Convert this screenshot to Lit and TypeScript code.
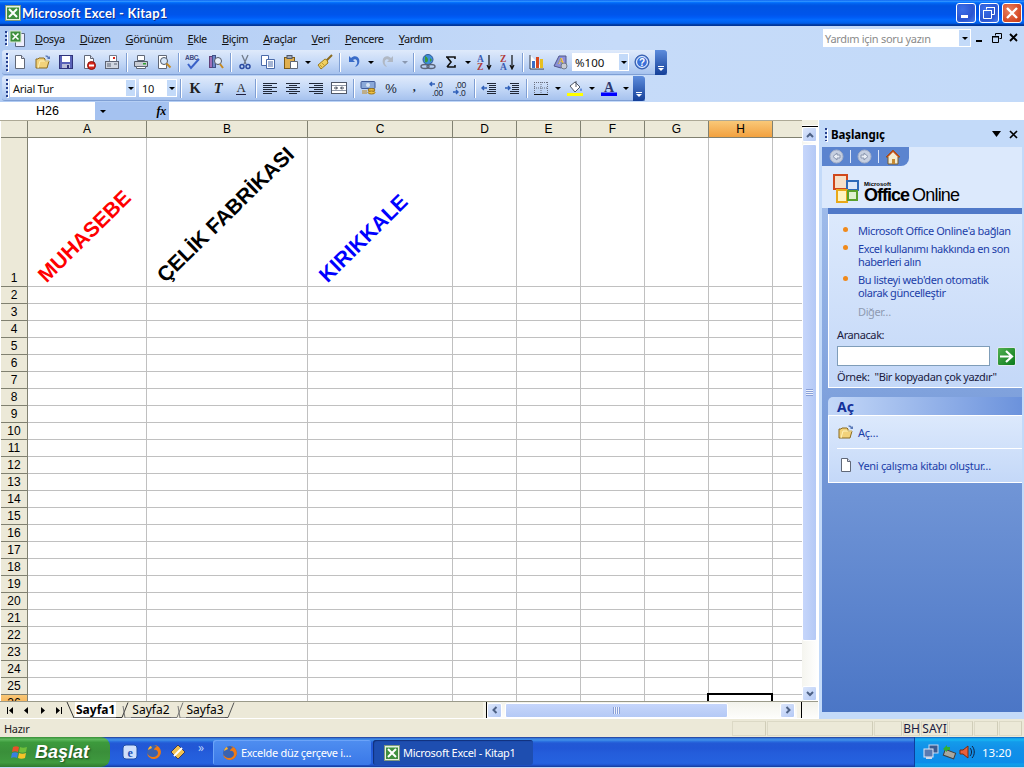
import { LitElement, html, css, svg, TemplateResult } from 'lit';
import { customElement } from 'lit/decorators.js';
import { classMap } from 'lit/directives/class-map.js';

const icon16 = (body: TemplateResult) =>
  html`<svg class="ico" width="16" height="16" viewBox="0 0 16 16">${body}</svg>`;

const excelIcon = svg`<rect x=".5" y=".5" width="15" height="15" fill="#e8f0e0" stroke="#7f9a7f"/><rect x="2" y="2" width="12" height="12" fill="#3f8f3f"/><path d="M4 4l8 8M12 4l-8 8" stroke="#fff" stroke-width="2"/><path d="M2 2h12v1H2z" fill="#8fc88f"/>`;
const firefox = svg`<circle cx="8" cy="8" r="7" fill="#3a62b0"/><path d="M8 1a7 7 0 1 1-7 8c1 2 3 4 6 4 3 0 5-2 5-4s-2-4-4-3c0-1 1-3 3-3-1-1-2-2-3-2z" fill="#f07a14"/><path d="M2 6c0-2 2-4 3-4l1 2z" fill="#f9b233"/>`;
const folder = svg`<path d="M1 5h2l1-1h5l1 1v2h4l-2 7H1z" fill="#f2d27a" stroke="#8a6a1e"/><path d="M3 14l2-7h9" fill="none" stroke="#fff2b8"/><path d="M10 2c2-1 3 0 4 1l1-1v3h-3l1-1c-1-1-2-1-3-2z" fill="#5878b8"/>`;
const page = svg`<path d="M3.5 1.5h6l3 3v10h-9z" fill="#fff" stroke="#606878"/><path d="M9.5 1.5v3h3" fill="#dde" stroke="#606878"/>`;

const ICONS: Record<string, TemplateResult> = {
  new: icon16(page),
  open: icon16(folder),
  save: icon16(svg`<rect x="1.5" y="1.5" width="13" height="13" fill="#5a62b8" stroke="#30347a"/><rect x="4" y="2" width="8" height="6" fill="#fff"/><rect x="4" y="10" width="8" height="4" fill="#b8bcd8"/><rect x="9" y="11" width="2" height="3" fill="#30347a"/>`),
  perm: icon16(svg`${page}<circle cx="10.5" cy="11.5" r="4" fill="#d8261c" stroke="#8a1410"/><rect x="8" y="10.5" width="5" height="2" fill="#fff"/>`),
  mail: icon16(svg`<path d="M5.5 1.5h7v8h-7z" fill="#fff" stroke="#70788a"/><rect x="1.5" y="7.5" width="13" height="7" fill="#d0d6e0" stroke="#5c6474"/><path d="M3 10h4M3 12h4M10 10h3" stroke="#5c6474"/><rect x="9" y="3" width="2" height="2" fill="#d8261c"/>`),
  print: icon16(svg`<path d="M4.5 1.5h7v5h-7z" fill="#fff" stroke="#606878"/><path d="M1.5 7.5h13v5h-13z" fill="#c8ccd4" stroke="#505868"/><path d="M3.5 12.5h9v2h-9z" fill="#fff" stroke="#606878"/><rect x="10" y="9" width="3" height="1.5" fill="#2ca02c"/>`),
  preview: icon16(svg`<path d="M2.5 1.5h8v13h-8z" fill="#fff" stroke="#606878"/><circle cx="8" cy="7" r="3.5" fill="#d8e8fa" stroke="#505868"/><path d="M10.5 9.5l4 4" stroke="#c88a20" stroke-width="2"/>`),
  spell: icon16(svg`<text x="0" y="6" font-family="Liberation Sans" font-size="6.5" font-weight="700" fill="#404a80">ABC</text><path d="M3 10l3 4 8-9" fill="none" stroke="#3a62c8" stroke-width="2"/>`),
  research: icon16(svg`<rect x="1.5" y="2.5" width="3" height="11" fill="#a070b8" stroke="#604078"/><rect x="4.5" y="1.5" width="3" height="12" fill="#7088c8" stroke="#405088"/><circle cx="10" cy="7" r="3.5" fill="#e8f0fa" stroke="#505868"/><path d="M12 10l3 4" stroke="#c88a20" stroke-width="2"/>`),
  cut: icon16(svg`<path d="M5 1l4 9M11 1L7 10" stroke="#707a8a" stroke-width="1.3"/><circle cx="5" cy="12.5" r="2" fill="none" stroke="#2a4aa0" stroke-width="1.5"/><circle cx="11" cy="12.5" r="2" fill="none" stroke="#2a4aa0" stroke-width="1.5"/>`),
  copy: icon16(svg`<path d="M1.5 1.5h7v10h-7z" fill="#fff" stroke="#4a6aa8"/><path d="M6.5 5.5h8v9h-8z" fill="#fff" stroke="#4a6aa8"/><path d="M8 8h5M8 10h5M8 12h5" stroke="#4a6aa8"/>`),
  paste: icon16(svg`<rect x="1.5" y="3.5" width="10" height="11" fill="#e0b050" stroke="#7a5a18"/><rect x="4" y="1.5" width="5" height="3" fill="#a0a8b8" stroke="#505868"/><path d="M7.5 7.5h7v7h-7z" fill="#fff" stroke="#606878"/>`),
  brush: icon16(svg`<path d="M15 1l-6 6" stroke="#8a6a1e" stroke-width="2"/><path d="M10 6l-2-1-7 6 3 4 7-6z" fill="#f0d060" stroke="#9a7a20"/><path d="M3 11l3 3M5 9l3 3" stroke="#c09a30"/>`),
  undo: icon16(svg`<path d="M3 2v6h6L7 6c3-2 5 1 4 4l-2 3c4-1 5-5 4-8-1-3-5-4-8-1z" fill="#3a6cc8"/>`),
  redo: icon16(svg`<path d="M13 2v6H7l2-2c-3-2-5 1-4 4l2 3c-4-1-5-5-4-8 1-3 5-4 8-1z" fill="#b0b8c4"/>`),
  link: icon16(svg`<circle cx="8" cy="5.5" r="5" fill="#3f8fd8" stroke="#305a98"/><path d="M5 2c2 1 3 2 3 4s-2 3-3 2zM10 4l2 2-2 2z" fill="#3a9a3a"/><ellipse cx="5" cy="12.5" rx="4" ry="2" fill="none" stroke="#5a6478" stroke-width="1.4"/><ellipse cx="11" cy="12.5" rx="4" ry="2" fill="none" stroke="#5a6478" stroke-width="1.4"/>`),
  sigma: icon16(svg`<path d="M3 3h9v2M4 3l4 5-4 5M4 13h8v-2" fill="none" stroke="#101010" stroke-width="1.6"/>`),
  az: icon16(svg`<text x="0" y="7.5" font-family="Liberation Serif" font-size="9.5" font-weight="700" fill="#3a5ab0">A</text><text x="0" y="15.5" font-family="Liberation Serif" font-size="9.5" font-weight="700" fill="#b03a3a">Z</text><path d="M12 1v13M10 11l2 4 2-4" fill="none" stroke="#101010" stroke-width="1.2"/>`),
  za: icon16(svg`<text x="0" y="7.5" font-family="Liberation Serif" font-size="9.5" font-weight="700" fill="#b03a3a">Z</text><text x="0" y="15.5" font-family="Liberation Serif" font-size="9.5" font-weight="700" fill="#3a5ab0">A</text><path d="M12 1v13M10 11l2 4 2-4" fill="none" stroke="#101010" stroke-width="1.2"/>`),
  chart: icon16(svg`<path d="M1 1v14h14" fill="#fff" stroke="#303848"/><rect x="3" y="7" width="3" height="7" fill="#3a6cc8"/><rect x="7" y="3" width="3" height="11" fill="#d8461c"/><rect x="11" y="5" width="3" height="9" fill="#e8c020"/>`),
  drawing: icon16(svg`<path d="M2 12L7 2h7v8l-5 4z" fill="#8a90d8" stroke="#50568a"/><text x="6" y="10" font-family="Liberation Serif" font-size="9" font-weight="700" fill="#f0c030">A</text><ellipse cx="12" cy="12" rx="3" ry="3" fill="#c8ccd4" stroke="#707888"/>`),
  help: icon16(svg`<circle cx="8" cy="8" r="7" fill="#5a8ae0" stroke="#2a50a0"/><circle cx="8" cy="8" r="5.4" fill="#3a70d8" stroke="#fff"/><text x="8" y="11.5" text-anchor="middle" font-family="Liberation Sans" font-size="10" font-weight="700" fill="#fff">?</text>`),
  bold: icon16(svg`<text x="8" y="13" text-anchor="middle" font-family="Liberation Serif" font-size="14.5" font-weight="700" fill="#202020">K</text>`),
  italic: icon16(svg`<text x="8" y="13" text-anchor="middle" font-family="Liberation Serif" font-size="14.5" font-weight="700" font-style="italic" fill="#202020">T</text>`),
  under: icon16(svg`<text x="8" y="12" text-anchor="middle" font-family="Liberation Serif" font-size="13" fill="#303030">A</text><path d="M3 14.5h10" stroke="#202040"/>`),
  left: icon16(svg`<path d="M1 3.5h14M1 5.5h9M1 7.5h14M1 9.5h9M1 11.5h14M1 13.5h9" stroke="#202838"/>`),
  center: icon16(svg`<path d="M1 3.5h14M4 5.5h8M1 7.5h14M4 9.5h8M1 11.5h14M4 13.5h8" stroke="#202838"/>`),
  right: icon16(svg`<path d="M1 3.5h14M6 5.5h9M1 7.5h14M6 9.5h9M1 11.5h14M6 13.5h9" stroke="#202838"/>`),
  merge: icon16(svg`<rect x=".5" y="2.5" width="15" height="11" fill="#fff" stroke="#505868"/><path d="M1 5.5h14M1 10.5h14" stroke="#9098a8"/><path d="M3 8h3M10 8h3M5 6.5L6.5 8 5 9.5M11 6.5L9.5 8 11 9.5" fill="none" stroke="#303848"/>`),
  currency: icon16(svg`<rect x="1" y="1.5" width="14" height="7" rx="1" fill="#8aa8d8" stroke="#405a98"/><circle cx="8" cy="5" r="2" fill="#d8e4f6"/><ellipse cx="11.5" cy="10" rx="3.5" ry="1.5" fill="#f0c040" stroke="#9a7418"/><ellipse cx="11.5" cy="12.5" rx="3.5" ry="1.5" fill="#f0c040" stroke="#9a7418"/><path d="M2 11h5M2 13h5" stroke="#c08a20"/>`),
  percent: icon16(svg`<text x="8" y="13" text-anchor="middle" font-family="Liberation Sans" font-size="13" fill="#202838">%</text>`),
  comma: icon16(svg`<text x="8" y="11" text-anchor="middle" font-family="Liberation Serif" font-size="12" font-weight="700" fill="#202838">,</text>`),
  incdec: icon16(svg`<path d="M6 4H1M3 2L1 4l2 2" fill="none" stroke="#2f5fb8" stroke-width="1.4"/><text x="7" y="7.500" font-family="Liberation Sans" font-size="8.5" fill="#202838">,0</text><text x="3" y="15.500" font-family="Liberation Sans" font-size="8.5" fill="#202838">,00</text>`),
  decdec: icon16(svg`<text x="3" y="7.500" font-family="Liberation Sans" font-size="8.5" fill="#202838">,00</text><path d="M1 12h5M4 10l2 2-2 2" fill="none" stroke="#2f5fb8" stroke-width="1.4"/><text x="7" y="15.500" font-family="Liberation Sans" font-size="8.5" fill="#202838">,0</text>`),
  outdent: icon16(svg`<path d="M6 3.5h9M8 5.5h7M8 7.5h7M8 9.5h7M6 11.5h9M6 13.5h9" stroke="#202838"/><path d="M6 8H1M3 6L1 8l2 2" fill="none" stroke="#2f5fb8" stroke-width="1.4"/>`),
  indent: icon16(svg`<path d="M6 3.5h9M8 5.5h7M8 7.5h7M8 9.5h7M6 11.5h9M6 13.5h9" stroke="#202838"/><path d="M1 8h5M4 6l2 2-2 2" fill="none" stroke="#2f5fb8" stroke-width="1.4"/>`),
  border: icon16(svg`<path d="M1.5 2v11M8 2v11M14.5 2v11M1 2.5h14M1 8h14" stroke="#6a7080" stroke-dasharray="1 1"/><path d="M1 14.5h14" stroke="#101010"/>`),
  fill: icon16(svg`<path d="M3 6l5-4 5 5-5 5z" fill="#fff" stroke="#505868"/><path d="M9 1v6" stroke="#505868"/><path d="M14 8c1 1 1 3 0 3s-1-2 0-3z" fill="#3a6cc8"/><rect x="0" y="13" width="16" height="3" fill="#ffff00"/>`),
  color: icon16(svg`<text x="8" y="11.5" text-anchor="middle" font-family="Liberation Serif" font-size="14" font-weight="700" fill="#303a70">A</text><rect x="0" y="12.5" width="16" height="3.5" fill="#0000ff"/>`),
};

type Tool = string;
// '|' separator, 'v' dropdown arrow, 'v-' disabled dropdown arrow
const STANDARD: Tool[] = ['new', 'open', 'save', 'perm', 'mail', '|', 'print', 'preview', '|', 'spell', 'research', '|', 'cut', 'copy', 'paste', 'v', 'brush', '|', 'undo', 'v', 'redo', 'v-', '|', 'link', 'sigma', 'v', 'az', 'za', '|', 'chart', 'drawing', 'zoom', 'help'];
const FORMAT: Tool[] = ['font', 'size', '|', 'bold', 'italic', 'under', '|', 'left', 'center', 'right', 'merge', '|', 'currency', 'percent', 'comma', 'incdec', 'decdec', '|', 'outdent', 'indent', '|', 'border', 'v', 'fill', 'v', 'color', 'v'];
const MENUS = ['Dosya', 'Düzen', 'Görünüm', 'Ekle', 'Biçim', 'Araçlar', 'Veri', 'Pencere', 'Yardım'];
const COLS = [
  { n: '', w: 27 }, { n: 'A', w: 119 }, { n: 'B', w: 161 }, { n: 'C', w: 145 }, { n: 'D', w: 64 },
  { n: 'E', w: 64 }, { n: 'F', w: 64 }, { n: 'G', w: 64 }, { n: 'H', w: 64 }, { n: '', w: 30 },
];
const HEADINGS: Record<string, { text: string; cls: string }> = {
  A: { text: 'MUHASEBE', cls: 'red' },
  B: { text: 'ÇELİK FABRİKASI', cls: 'black' },
  C: { text: 'KIRIKKALE', cls: 'blue' },
};
const STATUS = [{ w: 34 }, { w: 106 }, { w: 28 }, { w: 17, t: 'BH' }, { w: 27, t: 'SAYI' }, { w: 24 }, { w: 24 }, { w: 23 }];

const arrow = (dir: string) => html`<svg width="8" height="8" viewBox="0 0 8 8"><path d="${dir}" fill="none" stroke="#4d6185" stroke-width="2"/></svg>`;

@customElement('app-root')
export class AppRoot extends LitElement {
  static styles = css`
    :host { display: block; width: 1024px; height: 768px; overflow: hidden; font: 11px "Noto Sans", sans-serif; letter-spacing: -.3px; color: #000; background: #c3daf9; }
    * { box-sizing: border-box; }
    .app { display: flex; flex-direction: column; height: 768px; }
    svg { display: block; flex: none; }

    .title { height: 26px; display: flex; align-items: center; padding: 0 2px 0 5px; color: #fff; flex: none;
      background: linear-gradient(#0058ee 0%, #3593ff 4%, #288eff 6%, #127dff 8%, #036ffc 10%, #0262ee 14%, #0057e5 20%, #0054e3 24%, #0055eb 56%, #005bf5 66%, #026afe 76%, #0062ef 86%, #0052d6 92%, #0040ab 94%, #003092 100%); }
    .title b { font: 700 13px Lato, sans-serif; margin-left: 1px; flex: 1; text-shadow: 1px 1px #0f2f90; letter-spacing: .25px; }
    .wbtn { width: 20px; height: 20px; border: 1px solid #fff; border-radius: 3px; margin-left: 3px; background: radial-gradient(circle at 30% 30%, #3c6fe8, #2a54d0 60%, #4a7ef0); display: flex; align-items: center; justify-content: center; }
    .wbtn.close { background: radial-gradient(circle at 35% 35%, #e88060, #d8502c 60%, #c03810); }

    .bars { height: 76px; flex: none; background: linear-gradient(90deg, #b0cbf3, #c6dbf9 60%, #c3daf9); display: flex; flex-direction: column; }
    .menu { height: 25px; display: flex; align-items: center; padding-left: 3px; }
    .grip { width: 2px; height: 14px; margin: 0 2px 0 2px; flex: none; background: repeating-linear-gradient(#27418f 0 2px, transparent 2px 4px); box-shadow: 1px 1px #fff; }
    .menu .items { display: flex; gap: 15px; margin-left: 9px; color: #111; letter-spacing: -.42px; }
    .menu .items span::first-letter { text-decoration: underline; }
    .ask { margin-left: auto; width: 148px; height: 18px; background: #fff; display: flex; align-items: center; color: #8a8a8a; padding-left: 2px; justify-content: space-between; }
    .ask i { width: 11px; height: 16px; margin-right: 1px; background: #c3daf9; display: flex; align-items: center; justify-content: center; }
    .docbtns { width: 53px; display: flex; gap: 7px; padding-left: 4px; }
    .tri { width: 0; height: 0; border: 3px solid transparent; border-top: 3px solid #000; border-bottom: 0; flex: none; }

    .bar { height: 25px; display: flex; align-items: center; margin-left: 2px; padding-left: 2px; border-radius: 3px 0 0 3px; width: fit-content; background: linear-gradient(#dfeafb, #c5d9f7 50%, #a6c2ee); border-bottom: 1px solid #7f9fd4; margin-bottom: 1px; }
    .bar .grip { margin: 0 0 0 2px; height: 18px; }
    .btn { width: 23px; height: 22px; display: flex; align-items: center; justify-content: center; flex: none; }
    .sep { width: 6px; height: 19px; flex: none; display: flex; justify-content: center; }
    .sep::after { content: ""; width: 1px; background: #7f9fd4; box-shadow: 1px 0 #fff; }
    .dd { width: 11px; height: 22px; flex: none; display: flex; align-items: center; justify-content: center; }
    .dd.off .tri { border-top-color: #8a98b0; }
    .combo { height: 18px; background: #fff; display: flex; align-items: center; justify-content: space-between; padding-left: 3px; flex: none; color: #111; }
    .combo i { width: 11px; height: 18px; background: #c3daf9; border: 1px solid #fff; display: flex; align-items: center; justify-content: center; }
    .combo.font { width: 126px; margin-left: 2px; }
    .combo.size { width: 38px; margin-left: 3px; padding-left: 3px; }
    .combo.zoom { width: 57px; font-size: 11.5px; margin: 0 1px; letter-spacing: 0; }
    .chev { width: 12px; height: 25px; margin: 0 0 -1px 2px; background: linear-gradient(#5d8cdc, #143f98); border-radius: 0 3px 3px 0; display: flex; flex-direction: column; align-items: center; justify-content: flex-end; padding-bottom: 4px; gap: 1px; }
    .chev::before { content: ""; width: 6px; height: 1px; background: #fff; }
    .chev .tri { border-top-color: #fff; }

    .formula { height: 18px; flex: none; background: #fff; display: flex; font-size: 12px; }
    .name { width: 95px; padding-left: 36px; font: 12.5px/18px "Liberation Sans", sans-serif; letter-spacing: 0; }
    .fbtn { width: 74px; background: #a5c2f0; display: flex; align-items: center; justify-content: space-between; padding: 0 3px 0 5px; }
    .fbtn em { font: italic 700 12px "Liberation Serif", serif; }

    .main { height: 599px; flex: none; display: flex; }
    .sheet { width: 819px; flex: none; display: flex; flex-direction: column; background: #ece9d8; border-right: 1px solid #fff; }
    .sheetTop { flex: 1; display: flex; min-height: 0; padding-left: 1px; }
    .grid { width: 802px; flex: none; overflow: hidden; display: grid; grid-auto-rows: 17px; align-content: start; background: #fff; margin-left: -1px; padding-left: 1px; border-top: 1px solid #ada996; }
    .cell { border-right: 1px solid #c0c0c0; border-bottom: 1px solid #c0c0c0; position: relative; min-width: 0; }
    .cell.last { border-right: 0; }
    .hd { background: #ece9d8; border-right: 1px solid #808070; border-bottom: 1px solid #808070; font: 12px "Liberation Sans", sans-serif; letter-spacing: 0; display: flex; align-items: center; justify-content: center; }
    .hd.sel { background: linear-gradient(#f9c878, #f2a140); }
    .rowhd { align-items: flex-end; padding-bottom: 1px; line-height: 14px; }
    .grid .tall { display: flex; align-items: flex-end; }
    .rot { display: block; white-space: nowrap; font: 700 21px/24px "Liberation Sans", sans-serif; letter-spacing: 0; transform: rotate(-44.5deg); transform-origin: 0 100%; margin-bottom: -1px; }
    .rot.red { color: #f00; margin-left: 22px; }
    .rot.black { color: #000; margin-left: 22px; }
    .rot.blue { color: #00f; margin-left: 23px; }
    .active::after { content: ""; position: absolute; inset: -2px -1px -2px -2px; border: 2px solid #000; }

    .vs { width: 16px; flex: none; background: linear-gradient(90deg, #f5f5ef, #fff); display: flex; flex-direction: column; align-items: flex-start; }
    .vsplit { width: 16px; height: 7px; flex: none; background: #f1efe2; border-bottom: 1px solid #000; box-shadow: inset 0 -1px #fff; }
    .sbtn { width: 15px; height: 15px; flex: none; border: 1px solid #fff; border-radius: 2px; background: linear-gradient(135deg, #dbe6fb, #b4c9f5); display: flex; align-items: center; justify-content: center; }
    .vthumb { width: 15px; flex: none; height: 497px; margin: 2px 0 45px; border: 1px solid #fff; border-radius: 2px; background: linear-gradient(90deg, #c6d6fb, #b4c9f5); display: flex; align-items: center; justify-content: center; }
    .lines { width: 7px; height: 7px; background: repeating-linear-gradient(#8aa0d8 0 1px, #eef3fd 1px 2px); }
    .lines.h { background: repeating-linear-gradient(90deg, #8aa0d8 0 1px, #eef3fd 1px 2px); }

    .tabs { height: 18px; flex: none; display: flex; align-items: stretch; border-top: 1px solid #9a9a8a; border-bottom: 1px solid #fff; }
    .nav { width: 66px; display: flex; align-items: center; padding: 0 0 0 2px; flex: none; }
    .nav span { width: 16.6px; display: flex; justify-content: center; }
    .sheetTabs { width: 417px; flex: none; display: flex; font-size: 12px; letter-spacing: 0; align-items: stretch; }
    .tab { border-bottom: 1px solid #666; padding: 0 1px; line-height: 15px; }
    .tab.on { background: #fff; font-weight: 700; }
    .tab.off { background: #ece9d8; }
    .hs { flex: 1; display: flex; align-items: center; background: linear-gradient(#f3f3ec, #fdfdfb); }
    .hs .split { width: 4px; height: 16px; background: #f5f3e8; border-right: 1px solid #000; flex: none; }
    .hs .split.end { margin-left: 2px; width: 5px; }
    .hthumb { width: 223px; height: 15px; flex: none; margin: 0 52px 0 3px; border: 1px solid #fff; border-radius: 2px; background: linear-gradient(#c6d6fb, #b4c9f5); display: flex; align-items: center; justify-content: center; }

    .pane { flex: 1; padding: 5px 2px 7px 3px; display: flex; flex-direction: column; background: #c3daf9; min-width: 0; }
    .paneIn { flex: 1; display: flex; flex-direction: column; background: linear-gradient(#a8c3ee, #4b76c6); }
    .paneHead { height: 22px; background: #c3daf9; margin: 0 -2px 0 -3px; display: flex; align-items: center; padding: 0 0 4px 6px; flex: none; }
    .paneHead b { font: 700 11.5px "Noto Sans", sans-serif; letter-spacing: -.1px; flex: 1; margin-left: 4px; }
    .paneHead .grip { margin: 0; height: 13px; }
    .paneNav { height: 19px; background: #dce9fc; display: flex; flex: none; }
    .paneNav div { width: 87px; background: #5b84cf; border-radius: 0 0 8px 0; display: flex; align-items: center; padding-left: 7px; gap: 6px; }
    .paneNav i { width: 1px; height: 13px; background: #dbe6fa; }
    .logoRow { height: 42px; background: #dce9fc; display: flex; flex: none; align-items: center; padding: 4px 0 0 11px; color: #000; }
    .logoText { margin: 6px 0 0 2px; font-family: "Liberation Sans", sans-serif; display: flex; flex-direction: column; line-height: 1; }
    .logoText small { font-size: 6px; font-weight: 700; letter-spacing: 0; margin-bottom: -1px; }
    .logoText span { font-size: 18px; letter-spacing: -.8px; }
    .logoText span b { font-weight: 700; letter-spacing: -1px; margin-right: 3px; }
    .paneBody { margin-left: 6px; flex: none; display: flex; flex-direction: column; }
    .topband { height: 42px; margin-left: -6px; background: #dce9fc; }
    .rule { height: 6px; background: #5079c8; flex: none; }
    .panel { background: linear-gradient(#dce9fc, #c4d8f8); border: 1px solid #fff; border-right: 0; color: #1c3ea8; }
    .links { height: 174px; padding: 10px 6px 0 8px; border-top: 0; letter-spacing: -.4px; }
    .links ul { list-style: none; margin: 0; padding: 0; display: flex; flex-direction: column; gap: 5px; line-height: 13px; }
    .links li { padding-left: 21px; position: relative; }
    .links li::before { content: ""; position: absolute; left: 6px; top: 3px; width: 5px; height: 5px; border-radius: 50%; background: #f08a1c; }
    .links .more { color: #8e9bb2; padding-left: 21px; margin-top: 6px; line-height: 13px; }
    .links label { display: block; color: #1a1a40; margin-top: 10px; line-height: 14px; }
    .search { display: flex; gap: 7px; margin-top: 4px; align-items: center; }
    .search div { width: 153px; height: 20px; background: #fff; border: 1px solid #7f9db9; }
    .go { width: 19px; height: 19px; border-radius: 2px; background: linear-gradient(135deg, #52b052, #0a7a1a); border: 1px solid #e0e8f0; display: flex; align-items: center; justify-content: center; }
    .eg { color: #1a1a40; margin-top: 4px; line-height: 14px; display: flex; gap: 5px; }
    .acHead { height: 18px; margin: 9px 0 0 6px; border-radius: 5px 0 0 0; background: linear-gradient(90deg, #c4d8f8, #6b92dc); color: #12309a; font: 700 14px "Noto Sans", sans-serif; letter-spacing: 0; padding-left: 9px; line-height: 19px; flex: none; }
    .acBody { margin-left: 6px; height: 68px; flex: none; }
    .acBody .row { display: flex; align-items: center; gap: 4px; height: 32px; padding-left: 9px; }
    .acBody hr { margin: 0 0 0 8px; border: 0; border-top: 1px solid #fff; }

    .status { height: 18px; flex: none; background: #ece9d8; display: flex; align-items: center; padding-left: 4px; gap: 1px; padding-right: 2px; color: #222; }
    .status .txt { margin-right: auto; }
    .status .st { height: 15px; border: 1px solid #dcd9c6; border-right-color: #d0cdb8; color: #1a1a40; white-space: nowrap; line-height: 13px; font-size: 12px; letter-spacing: 0; text-align: center; display: flex; justify-content: center; }

    .task { height: 30px; flex: none; display: flex; align-items: stretch; color: #fff;
      background: linear-gradient(#1f2f86 0, #3165c4 3%, #3682e5 6%, #4490e6 10%, #3883e5 12%, #2b71e0 15%, #2663da 18%, #235bd6 20%, #2258d5 23%, #2157d6 38%, #245ddb 54%, #2562df 86%, #245fdc 89%, #2158d4 92%, #1d4ec0 95%, #1941a5 98%); }
    .start { width: 110px; flex: none; display: flex; align-items: center; padding-left: 11px; gap: 6px; border-radius: 0 9px 9px 0; font: italic 700 18px "Liberation Sans", sans-serif; letter-spacing: 0; text-shadow: 1px 1px 2px #1a4a1a;
      background: linear-gradient(#388e38 0, #5cb85c 8%, #3c9a3c 18%, #3a8f3a 50%, #3f9a3f 85%, #2f7a2f 100%); }
    .quick { width: 103px; flex: none; display: flex; align-items: center; padding-left: 12px; gap: 8px; }
    .quick span { font-size: 12px; color: #b8d0f8; line-height: 10px; margin: -8px 0 0 4px; }
    .tb { width: 158px; flex: none; margin: 3px 2px 2px 0; border-radius: 3px; display: flex; align-items: center; padding-left: 9px; gap: 3px; background: linear-gradient(#4f8ef0, #3a78e8); box-shadow: inset 1px 1px #6ba3f8; white-space: nowrap; }
    .tb.on { background: #1e4eb0; box-shadow: inset 1px 1px 1px #10307a; width: 160px; padding-left: 11px; }
    .tray { margin-left: auto; width: 110px; flex: none; display: flex; align-items: center; padding-left: 8px; gap: 2px; font-size: 11.5px; letter-spacing: 0;
      background: linear-gradient(#0c59b9 0, #139ee9 4%, #18b5f2 10%, #139beb 16%, #1290e8 40%, #0d8dea 85%, #0f9eed 90%, #119be9 94%, #1295d8 100%); border-left: 1px solid #0c3f9e; }
    .tray span { margin-left: 5px; }
  `;

  private tool(t: Tool) {
    if (t === '|') return html`<div class="sep"></div>`;
    if (t === 'v' || t === 'v-') return html`<div class="dd ${t === 'v-' ? 'off' : ''}"><div class="tri"></div></div>`;
    if (t === 'zoom') return html`<div class="combo zoom">%100<i><div class="tri"></div></i></div>`;
    if (t === 'font') return html`<div class="combo font">Arial Tur<i><div class="tri"></div></i></div>`;
    if (t === 'size') return html`<div class="combo size">10<i><div class="tri"></div></i></div>`;
    return html`<div class="btn">${ICONS[t]}</div>`;
  }

  private toolbar(items: Tool[]) {
    return html`<div class="bar"><div class="grip"></div>${items.map((t) => this.tool(t))}<div class="chev"><div class="tri"></div></div></div>`;
  }

  private renderGrid() {
    const rows = [];
    for (let r = 0; r <= 26; r++) {
      COLS.forEach((c, i) => {
        if (i === 0) {
          rows.push(html`<div class=${classMap({ hd: true, rowhd: r > 0, sel: r === 26 })}>${r || ''}</div>`);
        } else if (r === 0) {
          rows.push(html`<div class=${classMap({ hd: true, sel: c.n === 'H' })}>${c.n}</div>`);
        } else {
          const h = r === 1 ? HEADINGS[c.n] : undefined;
          rows.push(html`<div class=${classMap({ cell: true, tall: r === 1, last: i === 9, active: r === 26 && c.n === 'H' })}>
            ${h ? html`<span class="rot ${h.cls}">${h.text}</span>` : ''}
          </div>`);
        }
      });
    }
    const template = `grid-template-columns:${COLS.map((c) => c.w + 'px').join(' ')};grid-template-rows:17px 149px`;
    return html`<div class="grid" style=${template}>${rows}</div>`;
  }

  render() {
    return html`<div class="app">
      <div class="title">
        ${icon16(excelIcon)}<b>Microsoft Excel - Kitap1</b>
        <div class="wbtn"><svg width="12" height="12" viewBox="0 0 12 12"><rect x="1" y="8" width="7" height="3" fill="#fff"/></svg></div>
        <div class="wbtn"><svg width="14" height="14" viewBox="0 0 14 14"><path d="M4.5 3.5V1.500h8v7h-3M1.500 4.500h8v8h-8z" fill="none" stroke="#fff"/><path d="M1 4h9v1H1zM4 1h9v1H4z" fill="#fff"/></svg></div>
        <div class="wbtn close"><svg width="14" height="14" viewBox="0 0 14 14"><path d="M2 2l10 10M12 2L2 12" stroke="#fff" stroke-width="2.4"/></svg></div>
      </div>

      <div class="bars">
        <div class="menu">
          <div class="grip"></div>
          <svg width="17" height="17" viewBox="0 0 17 17"><path d="M6.5 3.5h9v13h-9z" fill="#eef" stroke="#5a6680"/><rect x="1" y="1" width="11" height="11" fill="#3f8f3f" stroke="#d8e8d0"/><path d="M3.5 3.500l6 6M9.500 3.500l-6 6" stroke="#fff" stroke-width="1.6"/></svg>
          <div class="items">${MENUS.map((m) => html`<span>${m}</span>`)}</div>
          <div class="ask">Yardım için soru yazın<i><div class="tri"></div></i></div>
          <div class="docbtns">
            <svg width="10" height="10" viewBox="0 0 10 10"><rect x="1" y="7" width="6" height="2"/></svg>
            <svg width="10" height="10" viewBox="0 0 10 10"><path d="M3.5 2.500V.5h6v5h-2M.5 3.500h6v6h-6z" fill="none" stroke="#000"/><path d="M0 3h7v1.500H0z"/></svg>
            <svg width="10" height="10" viewBox="0 0 10 10"><path d="M1 1l7 7M8 1L1 8" stroke="#000" stroke-width="1.8"/></svg>
          </div>
        </div>
        ${this.toolbar(STANDARD)}
        ${this.toolbar(FORMAT)}
      </div>

      <div class="formula">
        <div class="name">H26</div>
        <div class="fbtn"><div class="tri"></div><em>fx</em></div>
      </div>

      <div class="main">
        <div class="sheet">
          <div class="sheetTop">
            ${this.renderGrid()}
            <div class="vs">
              <div class="vsplit"></div>
              <div class="sbtn">${arrow('M1 6l3-3 3 3')}</div>
              <div class="vthumb"><div class="lines"></div></div>
              <div class="sbtn">${arrow('M1 2l3 3 3-3')}</div>
            </div>
          </div>
          <div class="tabs">
            <div class="nav">
              <span><svg width="7" height="7" viewBox="0 0 7 7"><path d="M0 0h1v7H0zM6 0v7L2 3.500z"/></svg></span>
              <span><svg width="5" height="7" viewBox="0 0 5 7"><path d="M4 0v7L0 3.500z"/></svg></span>
              <span><svg width="5" height="7" viewBox="0 0 5 7"><path d="M1 0v7l4-3.500z"/></svg></span>
              <span><svg width="7" height="7" viewBox="0 0 7 7"><path d="M6 0h1v7H6zM1 0v7l4-3.500z"/></svg></span>
            </div>
            <div class="sheetTabs">
              <svg width="9" height="16" viewBox="0 0 9 16"><path d="M0 0h1l7 16H0z" fill="#ece9d8"/><path d="M1 0l7 16h1V16" stroke="#333" fill="none"/></svg>
              <div class="tab on">Sayfa1</div>
              <svg width="15" height="16" viewBox="0 0 15 16"><path d="M0 15.500h6L12 .5" stroke="#333" fill="none"/><path d="M7 4l2 12h6" stroke="#777" fill="none"/></svg>
              <div class="tab off">Sayfa2</div>
              <svg width="15" height="16" viewBox="0 0 15 16"><path d="M0 15.500h6L12 .5" stroke="#777" fill="none"/><path d="M7 4l2 12h6" stroke="#777" fill="none"/></svg>
              <div class="tab off">Sayfa3</div>
              <svg width="10" height="16" viewBox="0 0 10 16"><path d="M0 15.500h3L9 .5" stroke="#555" fill="none"/></svg>
            </div>
            <div class="hs">
              <div class="split"></div>
              <div class="sbtn">${arrow('M5.500 1l-3 3 3 3')}</div>
              <div class="hthumb"><div class="lines h"></div></div>
              <div class="sbtn">${arrow('M2.500 1l3 3-3 3')}</div>
              <div class="split end"></div>
            </div>
          </div>
        </div>

        <div class="pane">
          <div class="paneHead">
            <div class="grip"></div><b>Başlangıç</b>
            <svg width="11" height="8" viewBox="0 0 11 8"><path d="M1 1h9L5.500 7z"/></svg>
            <svg width="22" height="9" viewBox="0 0 22 9"><path d="M8 1l7 7M15 1L8 8" stroke="#000" stroke-width="1.7"/></svg>
          </div>
          <div class="paneIn">
            <div class="paneNav"><div>
              <svg width="15" height="15" viewBox="0 0 15 15"><circle cx="7.5" cy="7.5" r="6.5" fill="#c6cfe0" stroke="#a5b0c8"/><path d="M8 4L4 7.500 8 11V9h3V6H8z" fill="#e8edf5" stroke="#8a96ae"/></svg><i></i>
              <svg width="15" height="15" viewBox="0 0 15 15"><circle cx="7.5" cy="7.5" r="6.5" fill="#c6cfe0" stroke="#a5b0c8"/><path d="M7 4l4 3.500L7 11V9H4V6h3z" fill="#e8edf5" stroke="#8a96ae"/></svg><i></i>
              <svg width="16" height="16" viewBox="0 0 16 16"><path d="M1 8l7-7 7 7h-2v7H3V8z" fill="#f4ecd0" stroke="#7a5a28"/><path d="M2 8l6-6 6 6" fill="none" stroke="#c04a18" stroke-width="1.5"/><rect x="7" y="10" width="3" height="5" fill="#c88a30"/></svg>
            </div></div>
            <div class="paneBody">
              <div class="topband">
                <div class="logoRow">
                  <svg width="29" height="30" viewBox="0 0 29 30"><rect x="1" y="1" width="13" height="14" fill="#f6e0c8" stroke="#d0481c" stroke-width="2"/><rect x="14" y="7" width="11" height="9" fill="#dde8f8" stroke="#2e6ab8" stroke-width="2"/><rect x="4" y="16" width="10" height="12" fill="#fff3c0" stroke="#e8a818" stroke-width="2"/><rect x="15" y="17" width="9" height="9" fill="#dff0d0" stroke="#5aa02c" stroke-width="2"/></svg>
                  <div class="logoText"><small>Microsoft</small><span><b>Office</b>Online</span></div>
                </div>
              </div>
              <div class="rule"></div>
              <div class="panel links">
                <ul>
                  <li>Microsoft Office Online'a bağlan</li>
                  <li>Excel kullanımı hakkında en son haberleri alın</li>
                  <li>Bu listeyi web'den otomatik olarak güncelleştir</li>
                </ul>
                <div class="more">Diğer…</div>
                <label>Aranacak:</label>
                <div class="search"><div></div><span class="go"><svg width="15" height="15" viewBox="0 0 15 15"><path d="M1 7.500h11M7 2l6 5.500L7 13" fill="none" stroke="#fff" stroke-width="2.2"/></svg></span></div>
                <div class="eg"><span>Örnek:</span><span>"Bir kopyadan çok yazdır"</span></div>
              </div>
            </div>
            <div class="acHead">Aç</div>
            <div class="panel acBody">
              <div class="row">${ICONS.open}Aç…</div>
              <hr />
              <div class="row">${ICONS.new}Yeni çalışma kitabı oluştur…</div>
            </div>
          </div>
        </div>
      </div>

      <div class="status">
        <div class="txt">Hazır</div>
        ${STATUS.map((s) => html`<div class="st" style="width:${s.w}px">${s.t ?? ''}</div>`)}
      </div>

      <div class="task">
        <div class="start">
          <svg width="18" height="18" viewBox="0 0 18 18"><path d="M2 4c2-1 4-1 6 0l-1 5c-2-1-4-1-6 0z" fill="#e8512a"/><path d="M9 4c2 1 4 1 7 0l-1 5c-2 1-5 1-7 0z" fill="#6fbf3a"/><path d="M1 10c2-1 4-1 6 0l-1 5c-2-1-4-1-6 0z" fill="#3a7fe0"/><path d="M8 10c2 1 5 1 7 0l-1 5c-2 1-5 1-7 0z" fill="#f6c428"/></svg>
          Başlat
        </div>
        <div class="quick">
          ${icon16(svg`<rect x="1" y="1" width="14" height="14" rx="3" fill="#cfe0fb" stroke="#1f4fa8"/><text x="8" y="12.5" text-anchor="middle" font-family="Liberation Serif" font-size="12" font-weight="700" fill="#1a50b8">e</text>`)}
          ${icon16(firefox)}
          ${icon16(svg`<path d="M8 1l7 7-7 7-7-7z" fill="#f0c050" stroke="#3a3a60"/><path d="M4 12L12 4" stroke="#fff" stroke-width="2"/>`)}
          <span>»</span>
        </div>
        <div class="tb">${icon16(firefox)}Excelde düz çerçeve i…</div>
        <div class="tb on">${icon16(excelIcon)}Microsoft Excel - Kitap1</div>
        <div class="tray">
          ${icon16(svg`<rect x="6" y="1" width="9" height="8" fill="#3a5a90" stroke="#c8d8f0"/><rect x="1" y="5" width="9" height="8" fill="#5a7ab0" stroke="#e0e8f8"/><rect x="3" y="13" width="6" height="2" fill="#d0d8e8"/>`)}
          ${icon16(svg`<rect x="3" y="7" width="11" height="6" transform="rotate(20 8 10)" fill="#a8a8a0" stroke="#404040"/><path d="M2 5l4-4v2h3v3H6v2z" fill="#30b030"/>`)}
          ${icon16(svg`<path d="M1 6h3l5-4v12l-5-4H1z" fill="#e8603c" stroke="#7a2a10"/><path d="M11 4c2 2 2 6 0 8M13 2c3 3 3 9 0 12" fill="none" stroke="#102040"/>`)}
          <span>13:20</span>
        </div>
      </div>
    </div>`;
  }
}
